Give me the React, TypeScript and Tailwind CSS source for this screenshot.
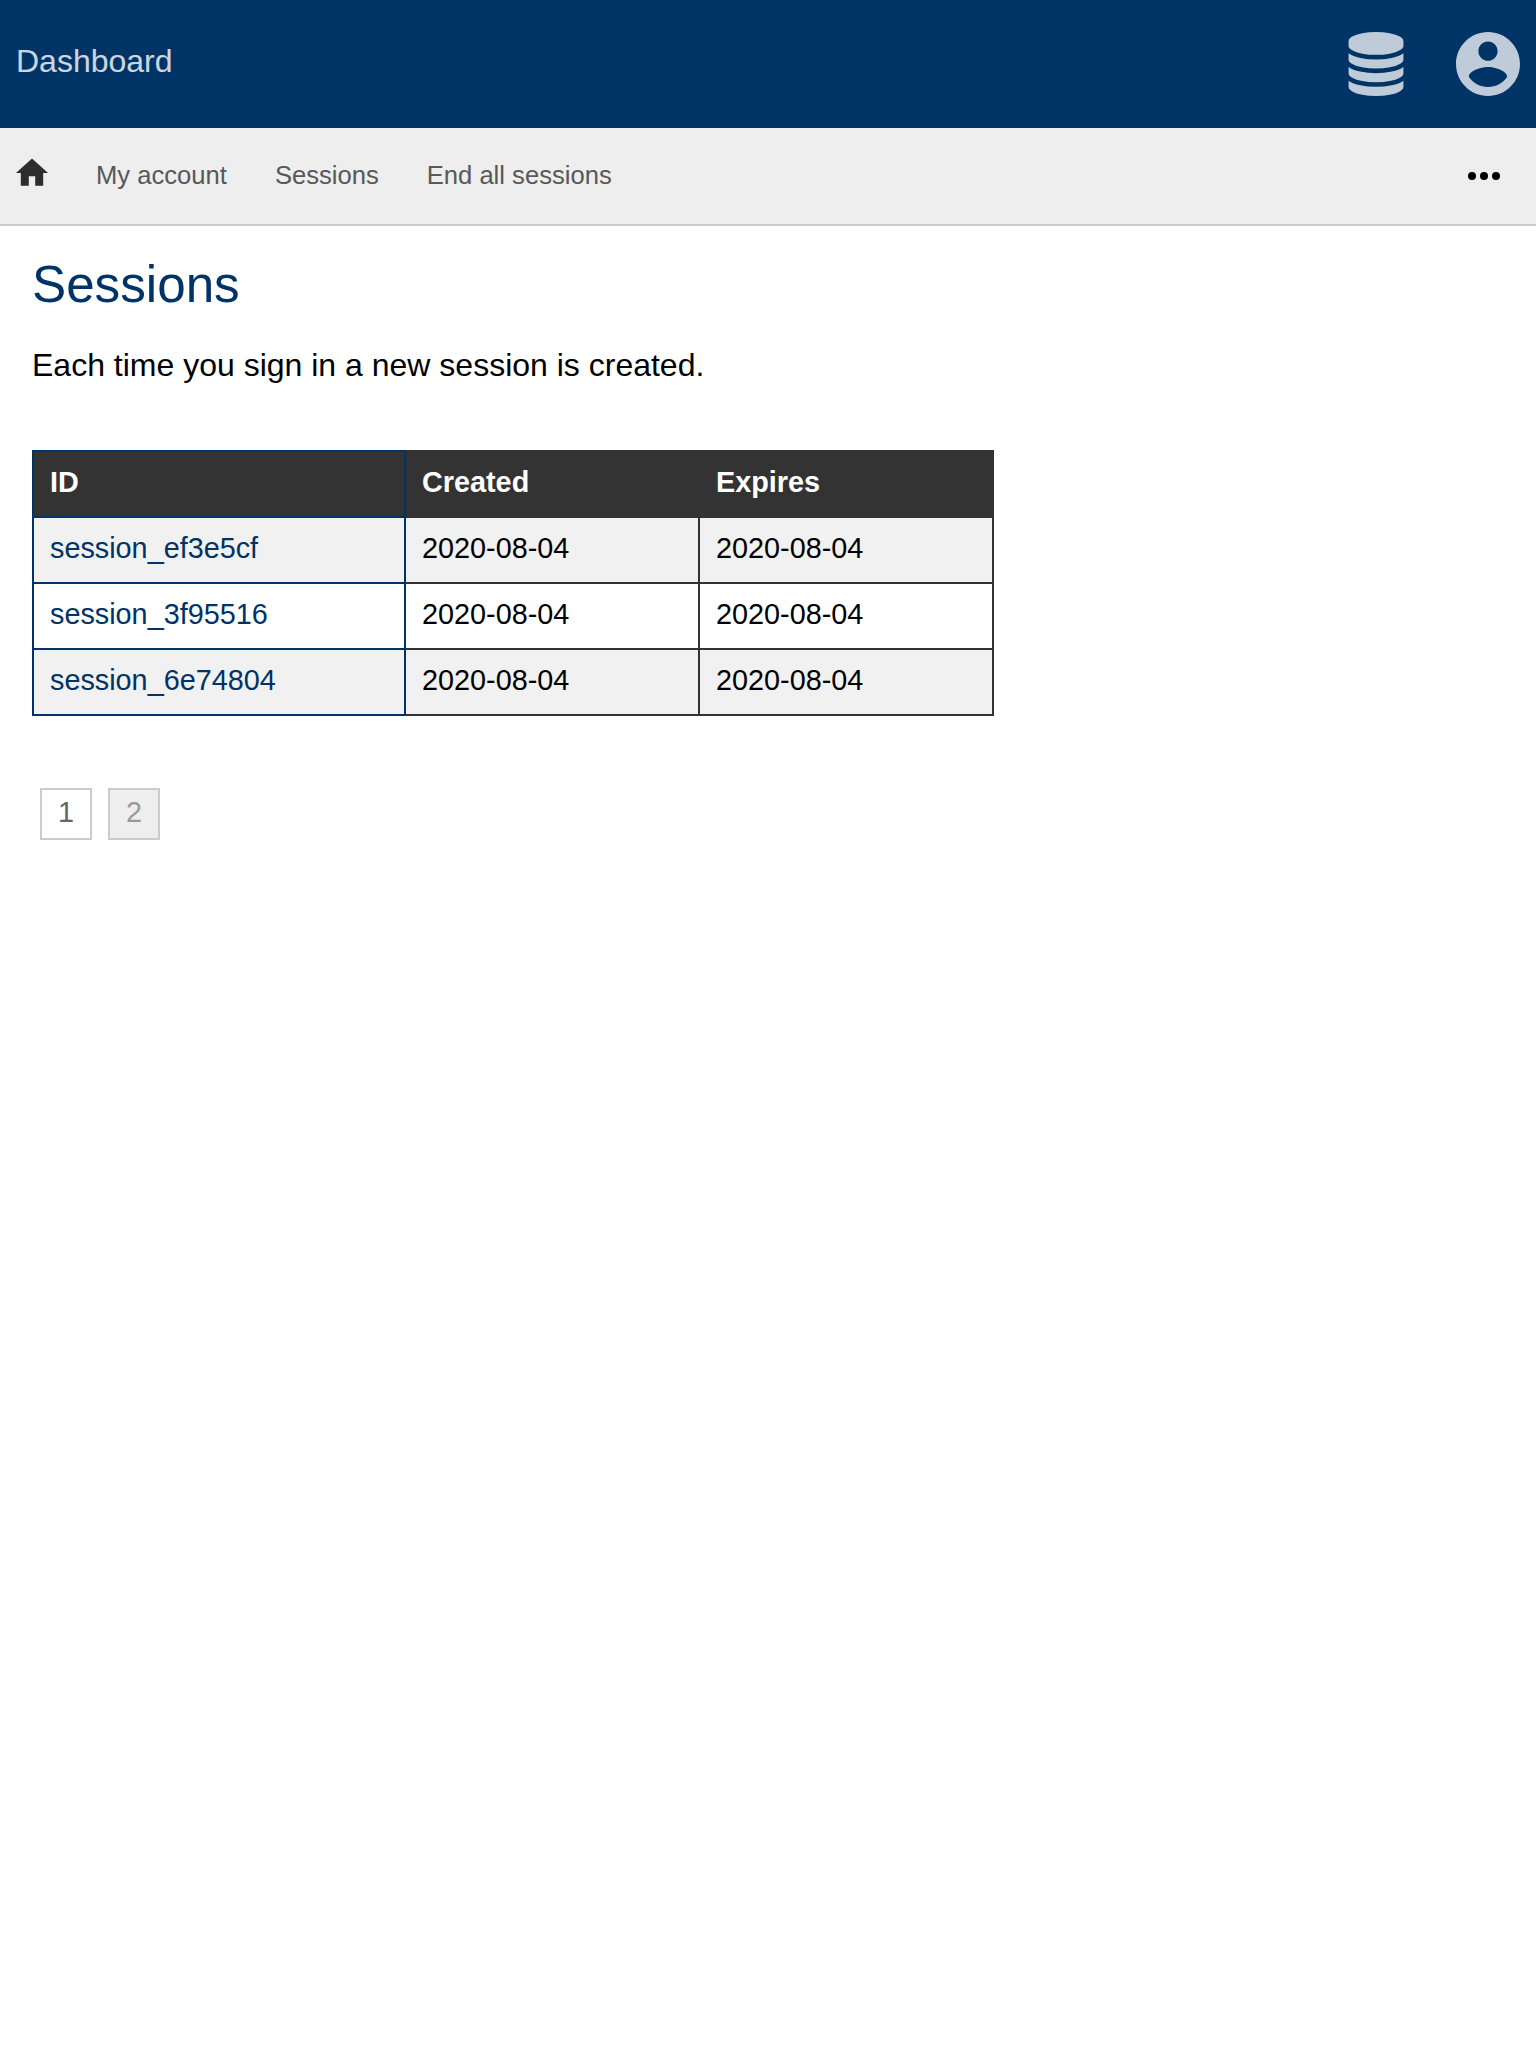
const navItems = ["My account", "Sessions", "End all sessions"];

const sessions = [
  { id: "session_ef3e5cf", created: "2020-08-04", expires: "2020-08-04" },
  { id: "session_3f95516", created: "2020-08-04", expires: "2020-08-04" },
  { id: "session_6e74804", created: "2020-08-04", expires: "2020-08-04" },
];

function DatabaseIcon() {
  return (
    <svg viewBox="-128 0 1792 1792" className="size-16" fill="currentColor" aria-hidden="true">
      <path d="M768 768q237 0 443-43t325-127v170q0 69-103 128t-280 93.5-385 34.5-385-34.5-280-93.5-103-128v-170q119 84 325 127t443 43zm0 768q237 0 443-43t325-127v170q0 69-103 128t-280 93.5-385 34.5-385-34.5-280-93.5-103-128v-170q119 84 325 127t443 43zm0-384q237 0 443-43t325-127v170q0 69-103 128t-280 93.5-385 34.5-385-34.5-280-93.5-103-128v-170q119 84 325 127t443 43zm0-1152q208 0 385 34.5t280 93.5 103 128v128q0 69-103 128t-280 93.5-385 34.5-385-34.5-280-93.5-103-128v-128q0-69 103-128t280-93.5 385-34.5z" />
    </svg>
  );
}

function AccountIcon() {
  return (
    <svg viewBox="2 2 20 20" className="size-16" fill="currentColor" aria-hidden="true">
      <path d="M12 2C6.48 2 2 6.48 2 12s4.48 10 10 10 10-4.48 10-10S17.52 2 12 2zm0 3c1.66 0 3 1.34 3 3s-1.34 3-3 3-3-1.34-3-3 1.34-3 3-3zm0 14.2c-2.5 0-4.71-1.28-6-3.22.03-1.99 4-3.08 6-3.08 1.99 0 5.97 1.09 6 3.08-1.29 1.94-3.5 3.22-6 3.22z" />
    </svg>
  );
}

function HomeIcon() {
  return (
    <svg viewBox="2 2 20 20" className="mb-[6px] size-8" fill="currentColor" aria-hidden="true">
      <path d="M10 20v-6h4v6h5v-8h3L12 3 2 12h3v8z" />
    </svg>
  );
}

function MoreIcon() {
  return (
    <svg viewBox="0 0 32 8" className="h-2 w-8" aria-hidden="true">
      <circle cx="4" cy="4" r="4" />
      <circle cx="16" cy="4" r="4" />
      <circle cx="28" cy="4" r="4" />
    </svg>
  );
}

export default function App() {
  return (
    <div className="min-h-screen bg-white font-['Liberation_Sans',Arial,sans-serif] text-black">
      <header className="flex h-32 items-center justify-between bg-[#003366] px-4 text-white/75">
        <a className="pb-[6px] text-[32px] leading-9 text-white/80">Dashboard</a>
        <div className="flex gap-12">
          <DatabaseIcon />
          <AccountIcon />
        </div>
      </header>

      <nav className="flex h-[98px] items-center border-b-2 border-[#cccccc] bg-[#eeeeee] px-4">
        <a className="text-[#2d2d2d]">
          <HomeIcon />
        </a>
        <div className="ml-12 flex gap-12 pb-[2px] text-[25.6px] leading-7 text-[#585858]">
          {navItems.map((item) => (
            <a key={item}>{item}</a>
          ))}
        </div>
        <button className="mr-5 ml-auto">
          <MoreIcon />
        </button>
      </nav>

      <main className="px-8 pt-[31px]">
        <h1 className="text-[51.2px] leading-14 text-[#003366]">Sessions</h1>
        <p className="mt-[34px] text-[32px] leading-9">
          Each time you sign in a new session is created.
        </p>

        <table className="mt-[67px] w-[962px] table-fixed border-collapse text-left text-[28.8px] leading-8">
          <colgroup>
            <col className="w-[372px]" />
            <col className="w-[294px]" />
            <col className="w-[294px]" />
          </colgroup>
          <thead>
            <tr className="h-[66px] bg-[#333333] align-top text-white">
              <th className="border-2 border-[#003366] px-4 pt-[14px]">ID</th>
              <th className="border-2 border-[#333333] px-4 pt-[14px]">Created</th>
              <th className="border-2 border-[#333333] px-4 pt-[14px]">Expires</th>
            </tr>
          </thead>
          <tbody>
            {sessions.map((s) => (
              <tr key={s.id} className="h-[66px] align-top odd:bg-[#f1f1f1]">
                <td className="border-2 border-[#003366] px-4 pt-[14px] text-[#003366]">{s.id}</td>
                <td className="border-2 border-[#333333] px-4 pt-[14px]">{s.created}</td>
                <td className="border-2 border-[#333333] px-4 pt-[14px]">{s.expires}</td>
              </tr>
            ))}
          </tbody>
        </table>

        <div className="mt-[72px] ml-2 flex gap-4 text-[28.8px] leading-8">
          <a className="size-[52px] border-2 border-[#cccccc] pt-[6px] text-center text-[#666666]">1</a>
          <a className="size-[52px] border-2 border-[#cccccc] bg-[#eeeeee] pt-[6px] text-center text-[#999999]">
            2
          </a>
        </div>
      </main>
    </div>
  );
}
